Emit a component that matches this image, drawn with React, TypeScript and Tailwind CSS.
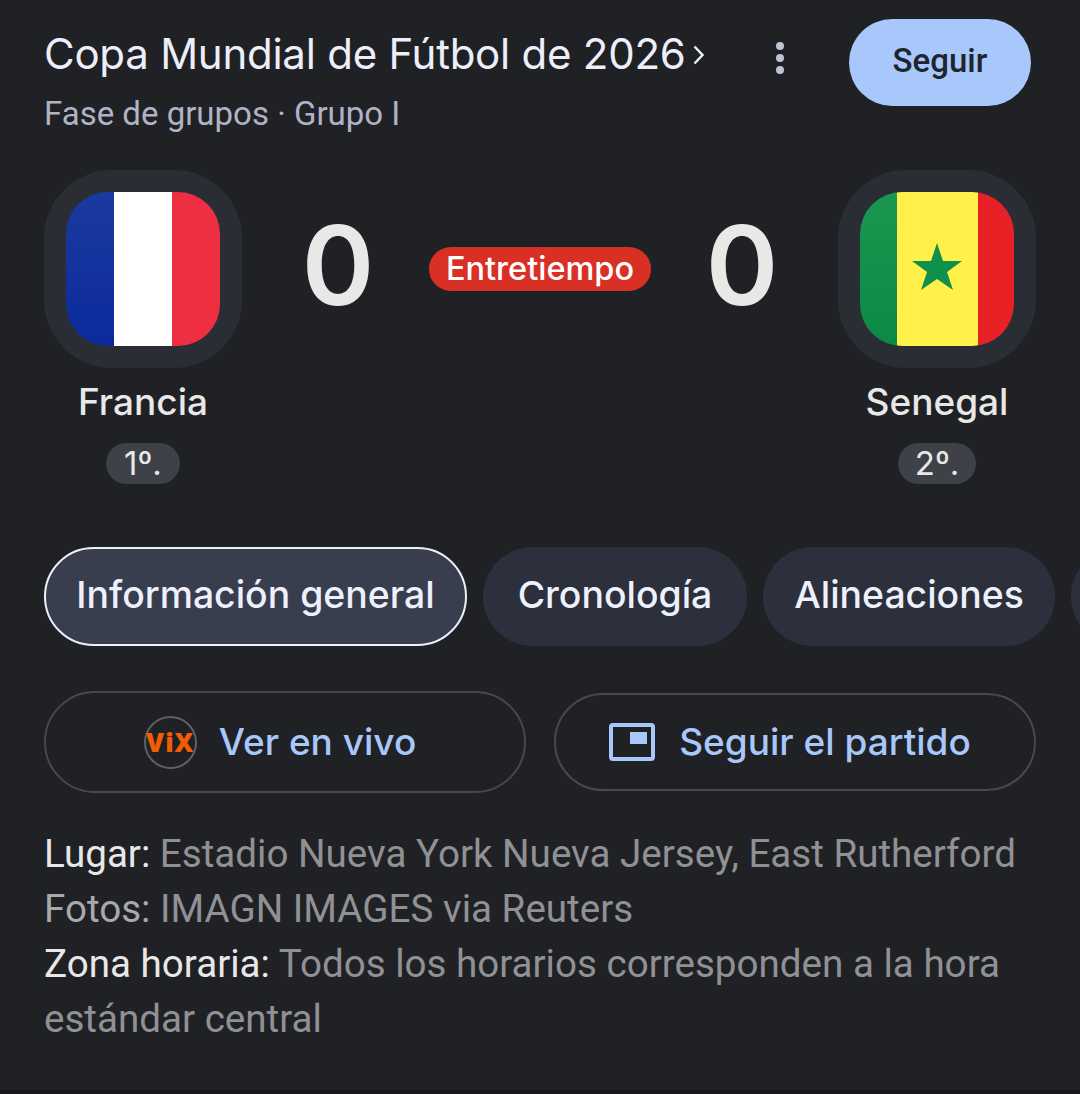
const head = { fontFamily: '"Inter", "Open Sans", sans-serif' };
const body = { fontFamily: 'Roboto, "Liberation Sans", sans-serif' };

function Flag({ left, mid, right, leftW, midW, star }: { left: string; mid: string; right: string; leftW: string; midW: string; star?: boolean }) {
  return (
    <div className="relative flex h-[154px] w-[154px] overflow-hidden rounded-[42px]">
      <div className={leftW} style={{ background: left }} />
      <div className={midW} style={{ background: mid }} />
      <div className="flex-1" style={{ background: right }} />
      {star && (
        <svg viewBox="0 0 50 48" className="absolute left-[52px] top-[51px] h-[48px] w-[50px]">
          <polygon fill="#0f914d" points="25,0 31,18 50,18 35,29 41,47 25,36 9,47 15,29 0,18 19,18" />
        </svg>
      )}
    </div>
  );
}

function Team({ name, rank, children, rankW }: { name: string; rank: string; children: React.ReactNode; rankW: string }) {
  return (
    <div className="flex w-[198px] shrink-0 flex-col items-center">
      <div className="flex h-[198px] w-[198px] items-center justify-center rounded-[68px] bg-[#2b2d34]">{children}</div>
      <div className="mt-[10px] text-[37px] font-medium leading-[48px] text-[#e8e8e8]" style={head}>{name}</div>
      <div className={`mt-[17px] flex h-[41px] items-center justify-center rounded-full bg-[#3f4149] text-[33px] text-[#e8e8e8] ${rankW}`} style={head}>{rank}</div>
    </div>
  );
}

function Tab({ children, active, w }: { children?: React.ReactNode; active?: boolean; w: string }) {
  return (
    <div className={`flex h-[99px] shrink-0 items-center justify-center rounded-full pb-[3px] text-[37.4px] font-medium text-[#eef0fb] ${w} ${active ? 'border-2 border-[#eef0f8] bg-[#393e4f]' : 'bg-[#2c303c]'}`} style={head}>
      {children}
    </div>
  );
}

export default function App() {
  return (
    <div className="flex h-[1094px] w-[1080px] flex-col overflow-hidden bg-[#202125]">
      <div className="flex flex-1 flex-col pl-[44px]">
        <header className="flex h-[150px] items-start pr-[49px]">
          <div className="w-[690px] shrink-0 pt-[29px]">
            <div className="flex items-center text-[42px] leading-[50px] text-[#eceefa]" style={head}>
              <span className="whitespace-nowrap tracking-[-0.25px]">Copa Mundial de Fútbol de 2026</span>
              <svg viewBox="0 0 11 20" className="ml-[7px] mt-[2px] h-[20px] w-[11px]" fill="none" stroke="#eceefa" strokeWidth="2.4">
                <path d="M1.5 1.5 L9.5 10 L1.5 18.5" />
              </svg>
            </div>
            <div className="mt-[15px] text-[33px] leading-[40px] text-[#b0b3c6]" style={body}>Fase de grupos · Grupo I</div>
          </div>
          <div className="mt-[42px] ml-[42px] flex w-[8px] flex-col gap-[4px]">
            <span className="h-[8px] w-[8px] rounded-full bg-[#c0c3d2]" />
            <span className="h-[8px] w-[8px] rounded-full bg-[#c0c3d2]" />
            <span className="h-[8px] w-[8px] rounded-full bg-[#c0c3d2]" />
          </div>
          <button className="ml-auto mt-[19px] flex h-[87px] w-[182px] items-center justify-center rounded-full bg-[#a8c7fa] pb-[4px] text-[33px] font-medium text-[#20242f]" style={body}>Seguir</button>
        </header>

        <section className="mt-[20px] flex items-start pr-[44px]">
          <Team name="Francia" rank="1º." rankW="w-[74px]">
            <Flag left="linear-gradient(180deg,#1a3a9f,#0b2a9c)" mid="#ffffff" right="#ee2f42" leftW="w-[48px]" midW="w-[58px]" />
          </Team>
          <div className="flex h-[198px] flex-1 items-center justify-center gap-[41px]">
            <div className="w-[100px] pb-[8px] text-center text-[110px] font-semibold leading-none text-[#e8e8e6]" style={head}>0</div>
            <div className="flex h-[44px] w-[222px] items-center justify-center rounded-full bg-[#d93025] text-[32.5px] font-medium text-white" style={head}>Entretiempo</div>
            <div className="w-[100px] pb-[8px] text-center text-[110px] font-semibold leading-none text-[#e8e8e6]" style={head}>0</div>
          </div>
          <Team name="Senegal" rank="2º." rankW="w-[78px]">
            <Flag left="linear-gradient(180deg,#1a9750,#0a8a46)" mid="#fff04a" right="#e82127" leftW="w-[37px]" midW="w-[81px]" star />
          </Team>
        </section>

        <nav className="mt-[63px] flex gap-[16px] overflow-hidden">
          <Tab active w="w-[423px]">Información general</Tab>
          <Tab w="w-[264px]">Cronología</Tab>
          <Tab w="w-[292px]">Alineaciones</Tab>
          <Tab w="w-[200px]" />
        </nav>

        <div className="mt-[45px] flex items-center gap-[28px] pr-[44px]">
          <div className="flex h-[102px] w-[482px] items-center justify-center gap-[22px] rounded-full border-2 border-[#48494d] pr-[10px] text-[37px] font-medium text-[#a8c7fa]" style={head}>
            <span className="flex h-[53px] w-[53px] items-center justify-center rounded-full border-2 border-[#5f6064] text-[26px] font-black tracking-[1px] text-[#f25c05]" style={{ fontFamily: '"Open Sans", sans-serif' }}>ViX</span>
            <span>Ver en vivo</span>
          </div>
          <div className="flex h-[98px] w-[482px] items-center justify-center gap-[24px] rounded-full border-2 border-[#48494d] pr-[10px] text-[37px] font-medium text-[#a8c7fa]" style={head}>
            <svg viewBox="0 0 46 38" className="h-[38px] w-[46px]" fill="none">
              <rect x="2" y="2" width="42" height="34" rx="2" stroke="#a8c7fa" strokeWidth="4" />
              <rect x="21" y="9" width="17" height="12" fill="#a8c7fa" />
            </svg>
            <span>Seguir el partido</span>
          </div>
        </div>

        <div className="mt-[33px] pr-[40px] text-[38.6px] leading-[55px] text-[#909194]" style={body}>
          <div className="whitespace-nowrap"><span className="text-[#e8e8e8]">Lugar:</span> Estadio Nueva York Nueva Jersey, East Rutherford</div>
          <div><span className="text-[#a8a9ab]">Fotos:</span> IMAGN IMAGES via Reuters</div>
          <div><span className="text-[#e8e8e8]">Zona horaria:</span> Todos los horarios corresponden a la hora estándar central</div>
        </div>
      </div>
      <div className="h-[4px] bg-[#17181b]" />
    </div>
  );
}
